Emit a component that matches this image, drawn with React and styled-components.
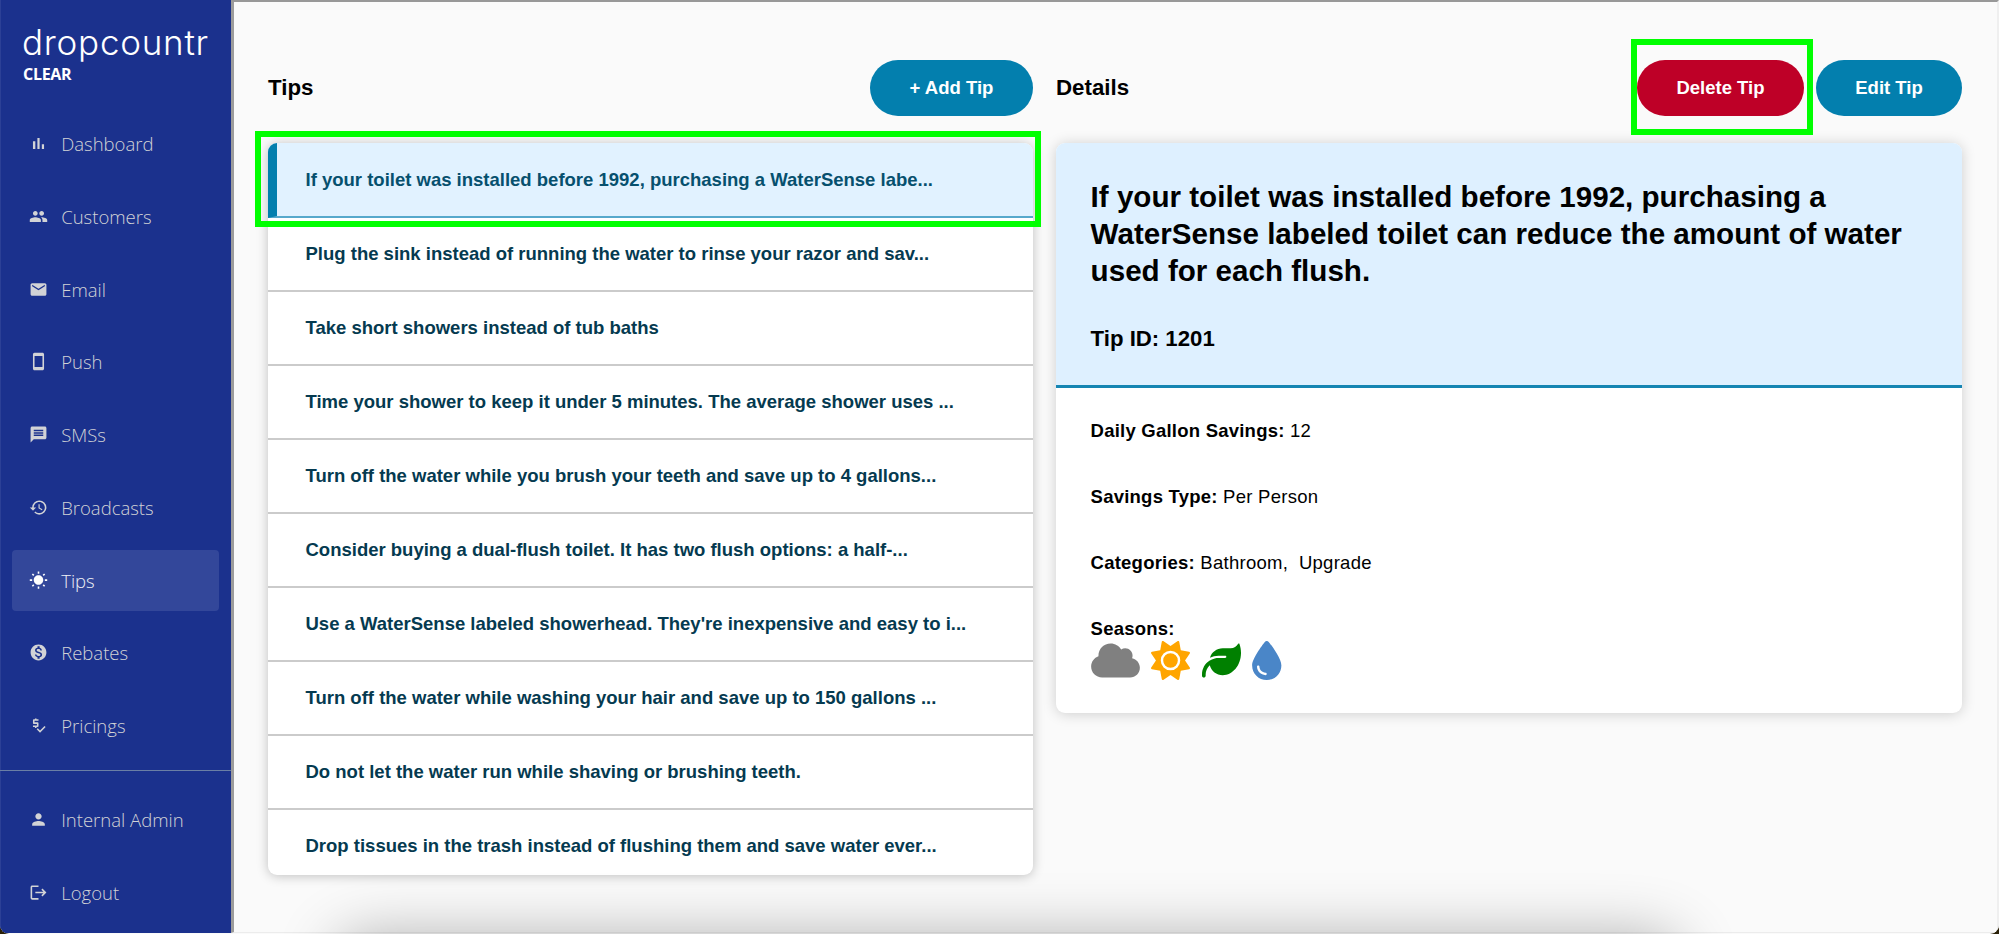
import React from "react";
import styled, { createGlobalStyle, css } from "styled-components";
import {
  MdPeople, MdEmail, MdStayCurrentPortrait, MdMessage, MdHistory, MdWbSunny,
  MdMonetizationOn, MdPriceCheck, MdPerson, MdLogout,
} from "react-icons/md";
import { FaCloud, FaSun, FaLeaf, FaDroplet } from "react-icons/fa6";

const sans = `"Liberation Sans", Arial, Helvetica, sans-serif`;

const GlobalStyle = createGlobalStyle`
  * { box-sizing: border-box; }
  body { margin: 0; background: #2b2108; }
  button { font: inherit; border: 0; cursor: pointer; }
`;

const Shell = styled.div`
  position: relative;
  display: flex;
  width: 1999px;
  height: 934px;
  overflow: hidden;
  border-radius: 0 0 9px 9px;
  background: #fafafa;
  font-family: ${sans};
`;

const Sidebar = styled.nav`
  flex: none;
  display: flex;
  flex-direction: column;
  width: 231px;
  height: 933px;
  background: #1b318d;
  color: #d2d3d6;
  font-family: "Open Sans", sans-serif;
  box-shadow: inset 1px 0 #2c4096;
`;

const Brand = styled.div`
  height: 108px;
  padding: 21px 0 0 22px;
  color: #fff;
`;

const Wordmark = styled.div`
  margin-bottom: 2px;
  font: 300 35px/42px Inter, sans-serif;
  letter-spacing: 0.75px;
  white-space: nowrap;
`;

const Product = styled.div`
  padding-left: 1px;
  font-size: 16px;
  font-weight: 700;
  line-height: 18px;
  letter-spacing: -0.3px;
`;

const NavGroup = styled.div`
  display: flex;
  flex-direction: column;
  gap: 11.7px;
  padding: ${(p) => p.$top}px 12px 0 12px;
  ${(p) => p.$divided && css`
    margin-top: 14.5px;
    border-top: 1px solid #6b7fa5;
  `}
`;

const NavItem = styled.a`
  display: flex;
  align-items: center;
  gap: 13.5px;
  height: 61px;
  padding-left: 16.7px;
  border-radius: 4px;
  font-size: 18.5px;
  font-weight: 300;
  white-space: nowrap;
  ${(p) => p.$active && css`
    background: #33479a;
    color: #fff;
  `}
  svg { flex: none; width: 19px; height: 19px; }
`;

const NavText = styled.span`
  color: ${(p) => (p.$active ? "#f0f1f6" : "inherit")};
`;

const Main = styled.main`
  flex: 1;
  display: grid;
  grid-template-columns: 765px 906px;
  column-gap: 23px;
  align-items: start;
  align-content: start;
  height: 933px;
  padding: 58px 0 0 34px;
  border-top: 2px solid #989898;
  border-left: 3px solid #9c9c9c;
  border-right: 2px solid #efefef;
  border-bottom: 1px solid #ececec;
`;

const Column = styled.section`
  display: flex;
  flex-direction: column;
  gap: 27px;
`;

const Head = styled.header`
  display: flex;
  align-items: center;
  height: 56px;
  gap: 12px;
`;

const HeadTitle = styled.h2`
  flex: 1;
  margin: 0;
  font-size: 22.3px;
  font-weight: 700;
`;

const Pill = styled.button`
  width: ${(p) => p.$width}px;
  height: 56px;
  padding: 0;
  border-radius: 28px;
  background: ${(p) => (p.$danger ? "#be0027" : "#037fae")};
  color: #fff;
  font-size: 18.5px;
  font-weight: 700;
`;

const TipList = styled.ul`
  height: 732px;
  margin: 0;
  padding: 0;
  overflow: hidden;
  list-style: none;
  border-radius: 9px;
  background: #fff;
  box-shadow: 0 1px 12px rgba(0, 0, 0, 0.24);
`;

const TipRow = styled.li`
  display: flex;
  align-items: center;
  height: 74px;
  padding-left: 37.5px;
  border-bottom: 2px solid #cbcbcb;
  color: #053a50;
  font-size: 18.5px;
  font-weight: 700;
  white-space: nowrap;
  ${(p) => p.$selected && css`
    height: 75px;
    padding-left: 28.5px;
    border-left: 9px solid #037fae;
    border-bottom-color: #56a9cc;
    background: #e1f2ff;
    color: #06506e;
  `}
`;

const Card = styled.article`
  height: 570px;
  overflow: hidden;
  border-radius: 9px;
  background: #fff;
  box-shadow: 0 1px 14px rgba(0, 0, 0, 0.18);
`;

const CardHead = styled.div`
  height: 245px;
  padding: 35px 34.6px 0;
  border-bottom: 3px solid #1585b2;
  background: #def0ff;
`;

const CardTitle = styled.h1`
  margin: 0 0 37px;
  font-size: 29.6px;
  line-height: 37px;
`;

const TipId = styled.div`
  font-size: 22.2px;
  font-weight: 700;
  line-height: 26px;
`;

const Facts = styled.div`
  display: flex;
  flex-direction: column;
  gap: 44px;
  padding: 32px 34.6px 0;
  font-size: 18.5px;
  line-height: 22px;
  letter-spacing: 0.27px;
  white-space: pre;
  b { letter-spacing: 0.23px; }
`;

const Seasons = styled.div`
  display: flex;
  align-items: center;
  gap: 11.5px;
  height: 40px;
  svg { width: 39px; height: 39px; }
  svg:first-child { width: 49px; }
  svg:last-child { width: 29.5px; }
`;

const Highlight = styled.div`
  position: absolute;
  left: ${(p) => p.$x}px;
  top: ${(p) => p.$y}px;
  width: ${(p) => p.$w}px;
  height: ${(p) => p.$h}px;
  border: 6px solid #00ff00;
  pointer-events: none;
`;

const DockShadow = styled.div`
  position: absolute;
  left: 338px;
  top: 940px;
  width: 1340px;
  height: 60px;
  border-radius: 30px;
  box-shadow: 0 0 60px 4px rgba(0, 0, 0, 0.3);
`;

const BarsIcon = () => (
  <svg viewBox="0 0 24 24" fill="currentColor">
    <path d="M5 9.2h3V19H5zM10.6 5h2.8v14h-2.8zM16.2 13H19v6h-2.8z" />
  </svg>
);

const primary = [
  ["Dashboard", BarsIcon], ["Customers", MdPeople], ["Email", MdEmail],
  ["Push", MdStayCurrentPortrait], ["SMSs", MdMessage], ["Broadcasts", MdHistory],
  ["Tips", MdWbSunny], ["Rebates", MdMonetizationOn], ["Pricings", MdPriceCheck],
];
const secondary = [["Internal Admin", MdPerson], ["Logout", MdLogout]];

const tips = [
  "If your toilet was installed before 1992, purchasing a WaterSense labe...",
  "Plug the sink instead of running the water to rinse your razor and sav...",
  "Take short showers instead of tub baths",
  "Time your shower to keep it under 5 minutes. The average shower uses ...",
  "Turn off the water while you brush your teeth and save up to 4 gallons...",
  "Consider buying a dual-flush toilet. It has two flush options: a half-...",
  "Use a WaterSense labeled showerhead. They're inexpensive and easy to i...",
  "Turn off the water while washing your hair and save up to 150 gallons ...",
  "Do not let the water run while shaving or brushing teeth.",
  "Drop tissues in the trash instead of flushing them and save water ever...",
];

const renderNav = ([label, Icon]) => (
  <NavItem key={label} $active={label === "Tips"}>
    <Icon />
    <NavText $active={label === "Tips"}>{label}</NavText>
  </NavItem>
);

export default function App() {
  return (
    <Shell>
      <GlobalStyle />
      <Sidebar>
        <Brand>
          <Wordmark>dropcountr</Wordmark>
          <Product>CLEAR</Product>
        </Brand>
        <NavGroup $top={5.4}>{primary.map(renderNav)}</NavGroup>
        <NavGroup $top={18} $divided>{secondary.map(renderNav)}</NavGroup>
      </Sidebar>
      <Main>
        <Column>
          <Head>
            <HeadTitle>Tips</HeadTitle>
            <Pill $width={163}>+ Add Tip</Pill>
          </Head>
          <TipList>
            {tips.map((t, i) => <TipRow key={t} $selected={i === 0}>{t}</TipRow>)}
          </TipList>
        </Column>
        <Column>
          <Head>
            <HeadTitle>Details</HeadTitle>
            <Pill $width={167} $danger>Delete Tip</Pill>
            <Pill $width={146}>Edit Tip</Pill>
          </Head>
          <Card>
            <CardHead>
              <CardTitle>
                If your toilet was installed before 1992, purchasing a<br />
                WaterSense labeled toilet can reduce the amount of water<br />
                used for each flush.
              </CardTitle>
              <TipId>Tip ID: 1201</TipId>
            </CardHead>
            <Facts>
              <div><b>Daily Gallon Savings:</b> 12</div>
              <div><b>Savings Type:</b> Per Person</div>
              <div><b>Categories:</b> Bathroom,  Upgrade</div>
              <div>
                <b>Seasons:</b>
                <Seasons>
                  <FaCloud color="#808080" />
                  <FaSun color="#ffa500" />
                  <FaLeaf color="#008000" />
                  <FaDroplet color="#4a86c8" />
                </Seasons>
              </div>
            </Facts>
          </Card>
        </Column>
      </Main>
      <DockShadow />
      <Highlight $x={255} $y={131} $w={786} $h={96} />
      <Highlight $x={1631} $y={39} $w={182} $h={96} />
    </Shell>
  );
}
